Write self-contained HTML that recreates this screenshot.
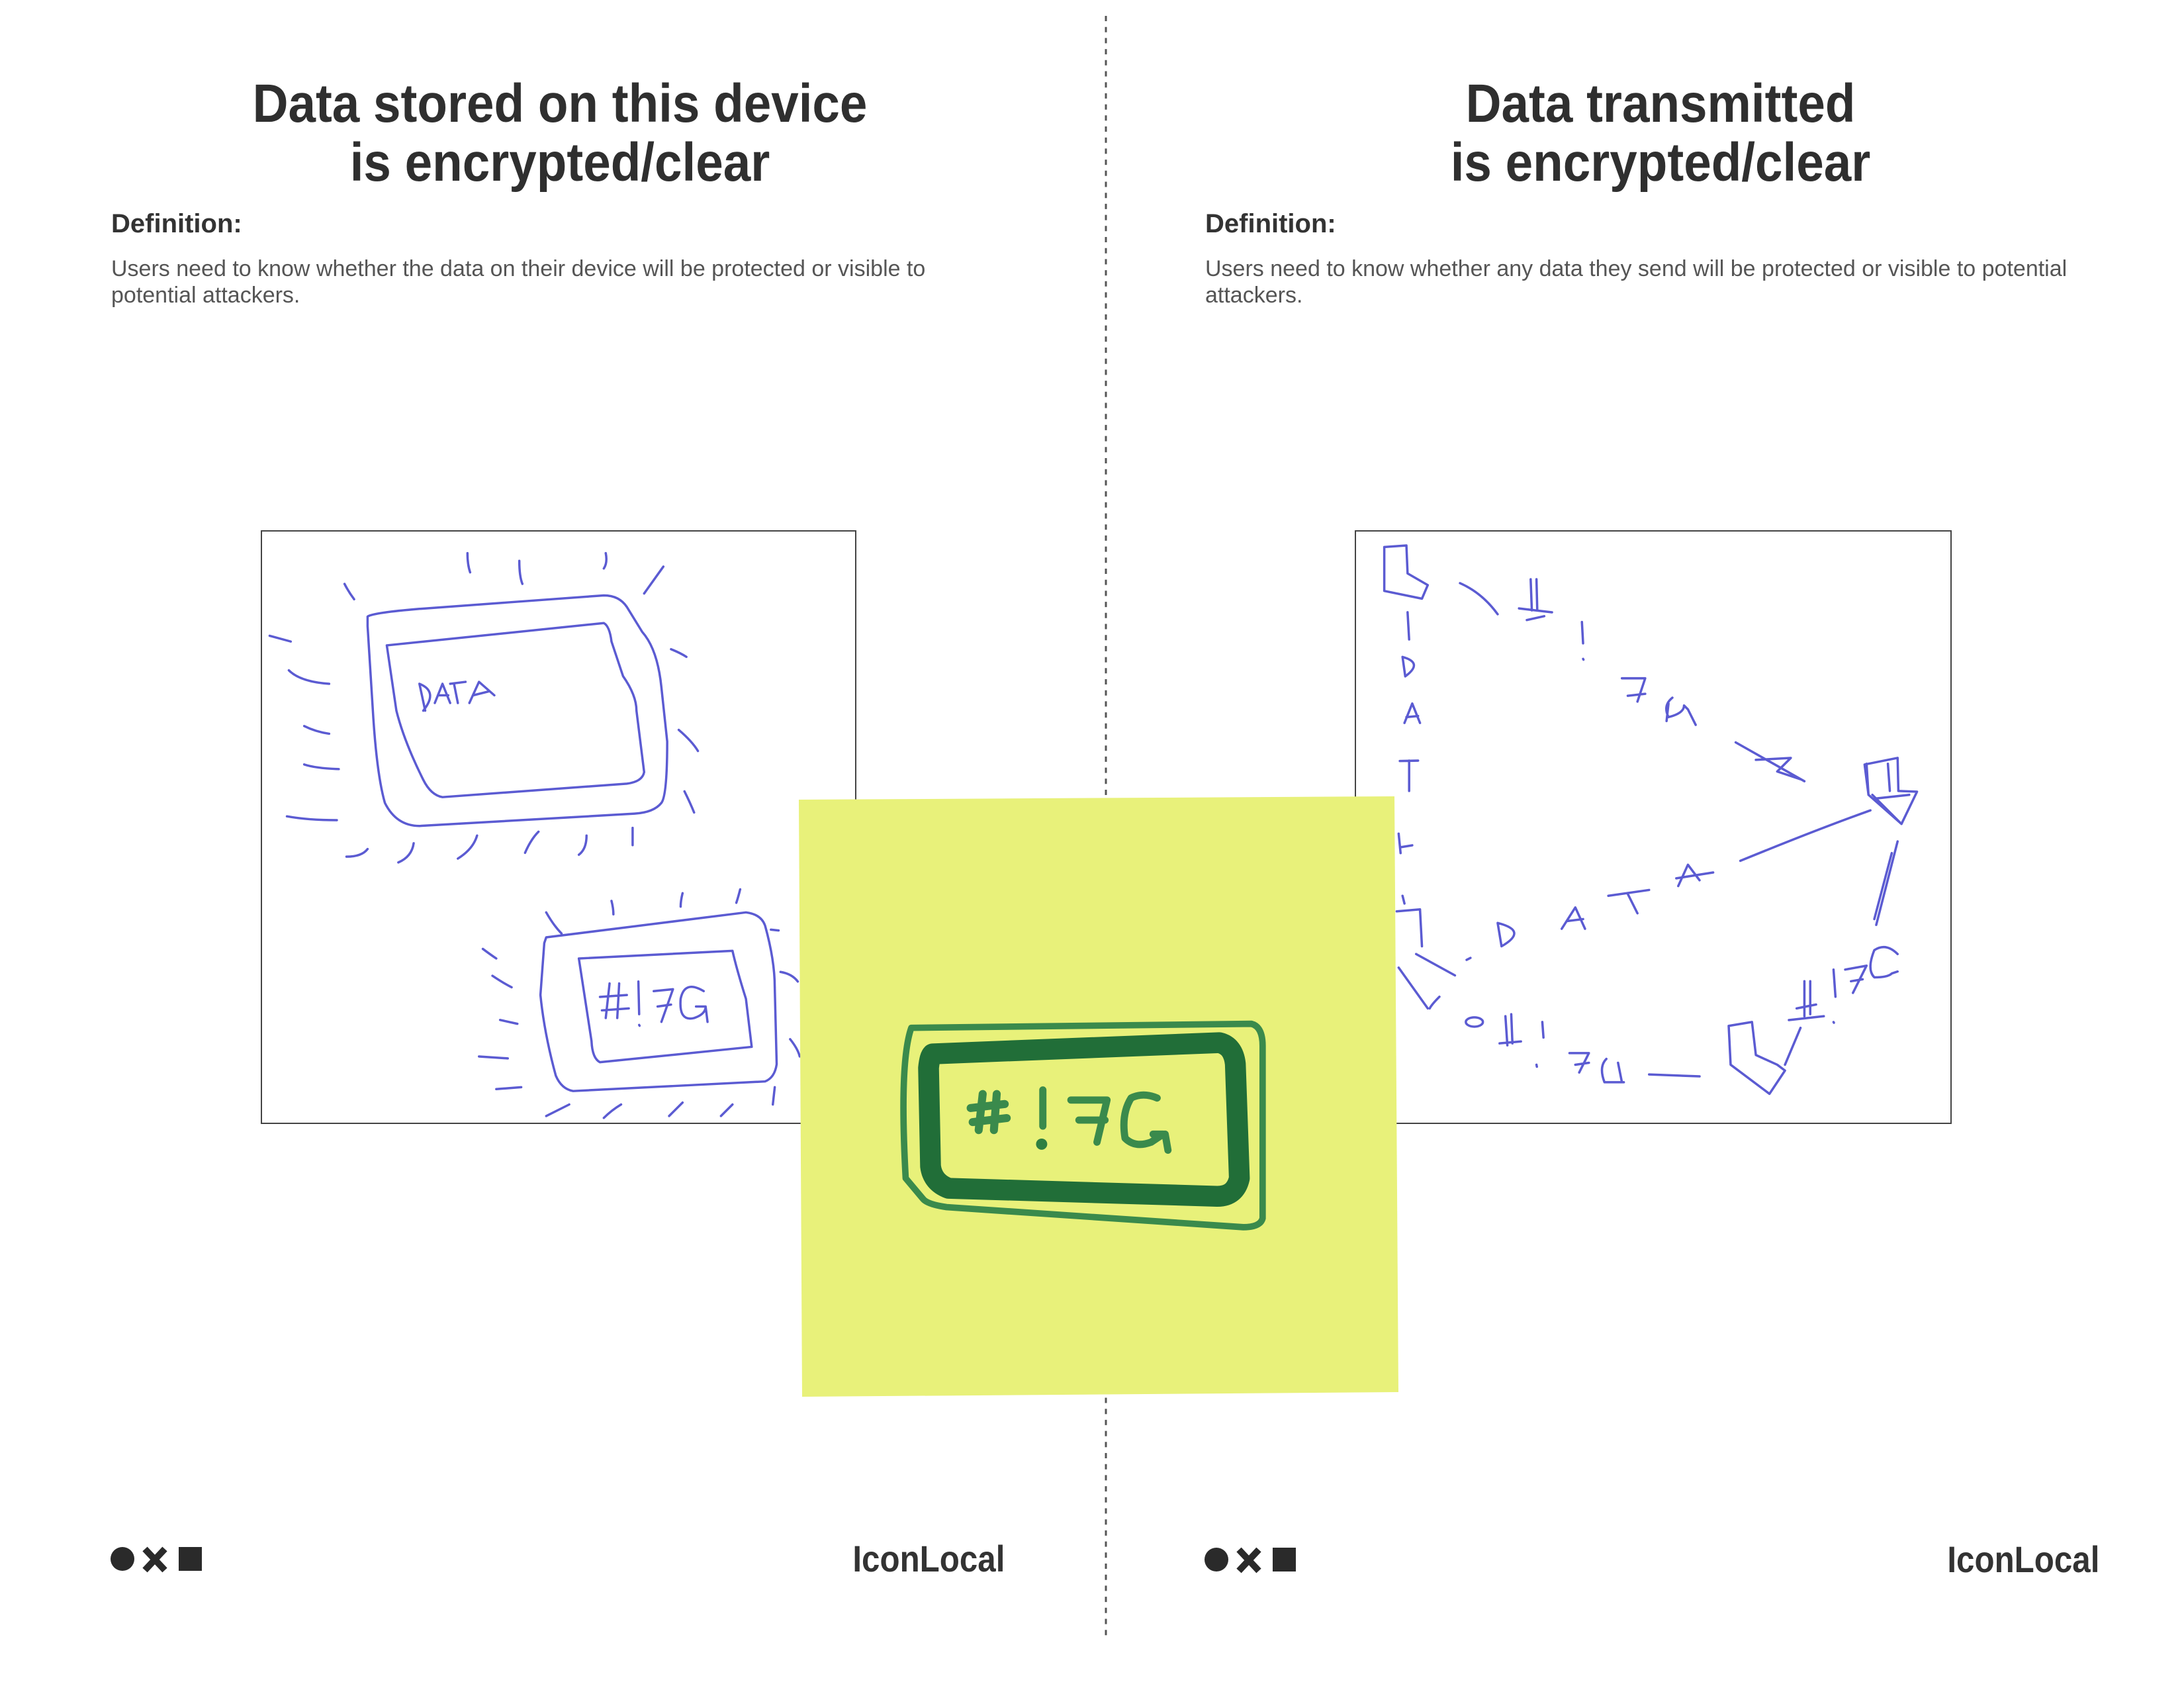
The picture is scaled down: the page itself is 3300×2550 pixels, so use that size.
<!DOCTYPE html>
<html><head><meta charset="utf-8">
<style>
html,body{margin:0;padding:0;background:#fff;}
body{width:3300px;height:2550px;position:relative;overflow:hidden;font-family:"Liberation Sans",Arial,sans-serif;color:#2f2f2f;}
.t{position:absolute;font-weight:bold;font-size:82px;line-height:89px;text-align:center;width:1400px;transform:scaleX(0.91);}
.d{position:absolute;font-weight:bold;font-size:40px;line-height:40px;color:#333;}
.b{position:absolute;font-size:34px;line-height:40px;color:#555;white-space:nowrap;}
.il{position:absolute;font-weight:bold;font-size:56px;line-height:56px;color:#333;transform:scaleX(0.88);transform-origin:right center;text-align:right;}
.box{position:absolute;border:2.5px solid #444;box-sizing:border-box;}
</style></head><body>

<div class="t" style="left:146px;top:112px;">Data stored on this device<br>is encrypted/clear</div>
<div class="t" style="left:1809px;top:112px;">Data transmitted<br>is encrypted/clear</div>

<div class="d" style="left:168px;top:318px;">Definition:</div>
<div class="d" style="left:1821px;top:318px;">Definition:</div>

<div class="b" style="left:168px;top:386px;">Users need to know whether the data on their device will be protected or visible to<br>potential attackers.</div>
<div class="b" style="left:1821px;top:386px;">Users need to know whether any data they send will be protected or visible to potential<br>attackers.</div>

<div class="box" style="left:394px;top:801px;width:900px;height:897px;"></div>
<div class="box" style="left:2047px;top:801px;width:902px;height:897px;"></div>

<svg width="3300" height="2550" style="position:absolute;left:0;top:0" xmlns="http://www.w3.org/2000/svg">
<line x1="1671" y1="24" x2="1671" y2="2478" stroke="#555" stroke-width="3" stroke-dasharray="8 8.7"/>

<g transform="translate(390,795) scale(0.5804)" fill="none" stroke="#5b5bd2" stroke-width="6" stroke-linecap="round" stroke-linejoin="round">
<path d="M285,235 Q300,225 420,215 L900,180 Q940,180 960,210 L1000,275 Q1040,320 1050,420 L1065,560 Q1065,700 1050,720 Q1030,745 980,748 L420,780 Q360,780 330,720 Q310,650 300,500 L285,260 Z"/>
<path d="M335,310 L900,252 Q915,260 920,300 L950,390 Q985,440 985,480 L1005,640 Q1000,665 960,670 L480,705 Q450,700 430,660 Q380,560 360,480 Z"/>
<path d="M420,410 L435,480 M420,410 Q470,430 430,480 M460,460 L480,410 L500,460 M468,440 L495,440 M510,410 L520,460 M500,410 L540,405 M550,460 L575,405 L615,440 M560,440 L600,430"/>
<path d="M545,70 Q545,100 552,120 M680,90 Q680,130 688,150 M905,70 Q910,95 900,110 M1055,105 Q1030,140 1005,175 M225,150 Q235,170 250,190 M30,285 L85,300 M80,375 Q110,405 185,410 M120,520 Q150,535 185,540 M120,620 Q150,630 210,632 M75,755 Q130,765 205,765 M230,860 Q270,860 285,840 M365,875 Q400,860 405,825 M520,865 Q560,840 570,805 M695,850 Q710,815 730,795 M835,855 Q855,840 855,805 M975,830 L975,785 M1075,320 Q1100,330 1115,340 M1095,530 Q1130,560 1145,585 M1110,690 Q1125,720 1135,745"/>
<path d="M750,1070 L1270,1005 Q1310,1010 1320,1040 Q1345,1130 1345,1200 L1350,1400 Q1345,1435 1320,1445 L820,1470 Q790,1465 775,1430 Q745,1320 735,1220 L745,1085 Z"/>
<path d="M835,1125 L1235,1105 Q1245,1150 1270,1230 L1285,1355 L890,1395 Q870,1385 868,1340 Z"/>
<path d="M915,1190 L905,1280 M940,1190 L935,1280 M890,1225 L960,1220 M895,1260 L965,1255 M990,1185 L992,1270 M992,1298 L993,1300 M1030,1210 L1080,1205 L1050,1290 M1040,1250 L1075,1245 M1160,1210 Q1110,1180 1100,1230 Q1095,1290 1135,1280 Q1165,1270 1165,1250 L1140,1250 M1165,1250 L1170,1290"/>
<path d="M750,1005 Q770,1040 790,1060 M920,975 Q925,995 925,1010 M1105,955 Q1100,975 1100,990 M1255,945 Q1250,965 1245,980 M1335,1050 L1355,1052 M1360,1160 Q1390,1165 1405,1185 M1385,1335 Q1405,1360 1410,1380 M1345,1460 L1340,1505 M585,1100 Q605,1115 620,1125 M610,1170 Q640,1190 660,1200 M630,1285 L675,1295 M575,1380 L650,1385 M620,1465 L685,1460 M750,1535 Q780,1520 810,1505 M900,1540 Q920,1520 945,1505 M1070,1535 Q1090,1515 1105,1500 M1205,1535 L1235,1505"/>
</g>

<g transform="translate(2040,790) scale(0.5867)" fill="none" stroke="#5b5bd2" stroke-width="6" stroke-linecap="round" stroke-linejoin="round">
<path d="M88,62 L145,58 L148,130 L200,160 L185,195 L88,175 Z"/>
<path d="M148,230 L152,300 M283,155 Q340,180 380,235"/>
<path d="M135,345 L142,395 M135,345 Q190,360 142,395"/>
<path d="M140,515 L160,465 L180,515 M145,500 L175,497"/>
<path d="M128,613 L175,612 M152,612 L152,690"/>
<path d="M465,145 L468,225 M480,145 L482,225 M435,220 L520,230 M455,250 L500,240"/>
<path d="M597,255 L600,310 M600,350 L601,352"/>
<path d="M700,400 L760,400 L740,460 M715,445 L760,440 M830,450 Q805,470 820,500 Q860,490 860,470 L870,480 L890,520 M820,465 L815,510"/>
<path d="M993,565 L1170,665 M1045,610 L1135,605 L1100,640 L1160,660"/>
<path d="M1325,622 L1410,605 L1412,690 L1460,692 L1420,775 L1335,700 Z M1345,700 L1420,775 M1335,700 L1330,620 M1385,620 L1390,690 M1350,710 L1440,700"/>
<path d="M1005,870 Q1200,790 1340,740"/>
<path d="M380,1030 L390,1090 M380,1030 Q460,1050 390,1090"/>
<path d="M545,1045 L580,990 L605,1045 M560,1025 L600,1020"/>
<path d="M665,960 L770,945 M715,955 L740,1005"/>
<path d="M845,935 L870,880 L900,920 M840,915 L935,900"/>
<path d="M1410,820 L1355,1035 M1395,850 L1350,1020"/>
<path d="M1170,1180 L1170,1270 M1185,1180 L1185,1265 M1130,1280 L1220,1270 M1150,1250 L1200,1240 M1245,1150 L1250,1220 M1245,1285 L1246,1287 M1275,1150 L1330,1140 L1295,1210 M1290,1180 L1320,1175 M1410,1110 Q1380,1080 1350,1100 Q1330,1150 1350,1170 Q1385,1170 1395,1160 L1410,1155"/>
<path d="M975,1295 L1035,1285 L1045,1370 L1100,1395 L1120,1410 L1080,1470 L980,1395 Z M1120,1395 L1160,1300"/>
<path d="M400,1270 L405,1345 M415,1265 L418,1340 M385,1340 L440,1335 M495,1285 L498,1325 M480,1395 L481,1400"/>
<path d="M565,1365 L615,1365 L590,1415 M580,1395 L615,1390 M660,1380 Q640,1400 655,1440 L705,1440 M690,1390 L700,1440"/>
<path d="M770,1420 L900,1425"/>
<path d="M120,1000 L180,995 L185,1090 M125,1145 L200,1250 M170,1110 L270,1165 M230,1220 Q210,1240 205,1250 M300,1125 L310,1120"/>
<ellipse cx="320" cy="1285" rx="22" ry="12"/>
<path d="M125,800 L130,850 M130,835 L160,830 M135,960 L140,980"/>
</g>

<polygon points="1207,1208 2107,1203 2113,2103 1212,2110" fill="#e8f17a"/>
<g transform="translate(1200,1180) scale(0.606)" fill="none" stroke-linecap="round" stroke-linejoin="round">
<path d="M292,615 L1140,605 Q1168,612 1168,660 L1168,1090 Q1162,1112 1120,1112 L380,1062 Q330,1055 320,1040 L278,990 Q262,700 292,615 Z" stroke="#3a8a4c" stroke-width="16"/>
<path d="M345,680 L1060,652 Q1095,660 1100,705 L1110,990 Q1100,1035 1055,1035 L385,1015 Q345,1000 340,960 L335,715 Q338,685 345,680 Z" stroke="#216e38" stroke-width="52"/>
<path d="M470,780 L460,870 M505,780 L498,870 M440,815 L525,805 M445,850 L530,840" stroke="#3a8a4c" stroke-width="20"/>
<path d="M620,770 L620,860" stroke="#3a8a4c" stroke-width="18"/>
<circle cx="617" cy="905" r="14" fill="#2f7f42"/>
<path d="M690,795 L780,795 L755,900 M710,845 L775,845" stroke="#3a8a4c" stroke-width="18"/>
<path d="M905,790 Q870,775 840,790 Q815,830 825,890 Q850,915 890,900 L920,880 L895,880 M925,880 L932,920" stroke="#3a8a4c" stroke-width="18"/>
</g>

<circle cx="185" cy="2355" r="18" fill="#2a2a2a"/>
<path d="M219,2340 L249,2372 M249,2340 L219,2372" stroke="#2a2a2a" stroke-width="10"/>
<rect x="270" y="2337" width="35" height="36" fill="#2a2a2a"/>
<circle cx="1838" cy="2356" r="18" fill="#2a2a2a"/>
<path d="M1872,2341 L1902,2373 M1902,2341 L1872,2373" stroke="#2a2a2a" stroke-width="10"/>
<rect x="1923" y="2338" width="35" height="36" fill="#2a2a2a"/>
</svg>

<div class="il" style="right:1782px;top:2327px;">IconLocal</div>
<div class="il" style="right:128px;top:2328px;">IconLocal</div>

</body></html>
